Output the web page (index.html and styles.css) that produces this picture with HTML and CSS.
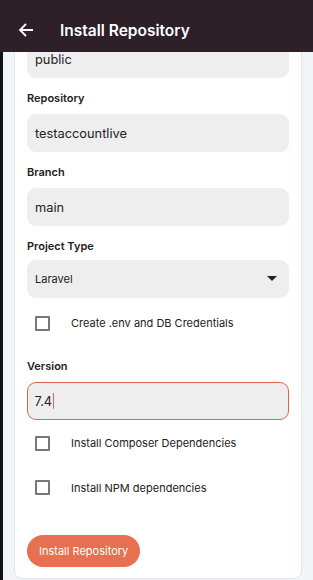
FILE: index.html
```html
<!DOCTYPE html>
<html lang="en">
<head>
    <meta charset="UTF-8">
    <meta name="viewport" content="width=device-width, initial-scale=1.0">
    <title>Install Repository</title>
    <link rel="stylesheet" href="styles.css">
</head>
<body>
    <header class="app-bar">
        <svg class="back" width="16" height="16" viewBox="0 0 16 16">
            <path d="M15 8H2M8 2L2 8l6 6" fill="none" stroke="#fff" stroke-width="1.8"/>
        </svg>
        <h1>Install Repository</h1>
    </header>

    <div class="card">
        <div class="field">public</div>

        <label class="label">Repository</label>
        <div class="field">testaccountlive</div>

        <label class="label">Branch</label>
        <div class="field">main</div>

        <label class="label">Project Type</label>
        <div class="field select">
            <span>Laravel</span>
            <svg width="10" height="6" viewBox="0 0 10 6"><path d="M0 0h10L5 5z" fill="#222"/></svg>
        </div>

        <div class="check-row"><span class="box"></span>Create .env and DB Credentials</div>

        <label class="label">Version</label>
        <div class="field focused">7.4<span class="caret"></span></div>

        <div class="check-row"><span class="box"></span>Install Composer Dependencies</div>
        <div class="check-row"><span class="box"></span>Install NPM dependencies</div>

        <button class="submit">Install Repository</button>
    </div>
</body>
</html>
```

FILE: styles.css
```css
body {
    margin: 0;
    padding: 40px 11px 0 0;
    height: 580px;
    box-sizing: border-box;
    overflow: hidden;
    background-color: #f3f4f8;
    border-left: 3px solid #111;
    font-family: Inter, "Open Sans", sans-serif;
    color: #222;
}
.app-bar {
    position: fixed;
    top: 0;
    left: 0;
    right: 0;
    height: 52px;
    background-color: #2e2029;
    display: flex;
    align-items: center;
    padding: 0 0 0 18px;
    z-index: 2;
}
.app-bar .back {
    margin-top: 8px;
}
.app-bar h1 {
    margin: 8px 0 0 26px;
    font-size: 15.5px;
    font-weight: 600;
    color: #fff;
}
.card {
    margin-left: 11px;
    background-color: #fff;
    border: 1px solid #e3e5ea;
    border-top: none;
    border-radius: 0 0 8px 8px;
    padding: 0 12px 10px 12px;
    height: 539px;
    box-sizing: border-box;
}
.label {
    display: block;
    margin: 13px 0 9px;
    font-size: 11px;
    line-height: 14px;
    font-weight: 600;
    color: #222;
}
.field {
    height: 38px;
    background-color: #eeeeee;
    border-radius: 9px;
    padding: 0 8px;
    display: flex;
    align-items: center;
    font-size: 12.8px;
    box-sizing: border-box;
}
.select {
    justify-content: space-between;
    padding-right: 12px;
    font-size: 11px;
    margin: -2px 0 2px;
}
.focused {
    border: 1.5px solid #d9654f;
    padding-left: 6.5px;
}
.caret {
    display: inline-block;
    width: 1px;
    height: 16px;
    background-color: #e0654a;
    margin-left: 1px;
}
.check-row {
    height: 46px;
    display: flex;
    align-items: center;
    font-size: 11px;
    color: #222;
}
.check-row:last-of-type {
    height: 43px;
}
.check-row .box {
    width: 11px;
    height: 11px;
    border: 2px solid #777;
    border-radius: 1px;
    margin: 0 21px 0 8px;
}
.submit {
    margin-top: 26px;
    height: 32px;
    padding: 0 12px;
    border: none;
    border-radius: 16px;
    background-color: #e6704f;
    color: #fff;
    font-family: Inter, "Open Sans", sans-serif;
    font-size: 11px;
}
```
